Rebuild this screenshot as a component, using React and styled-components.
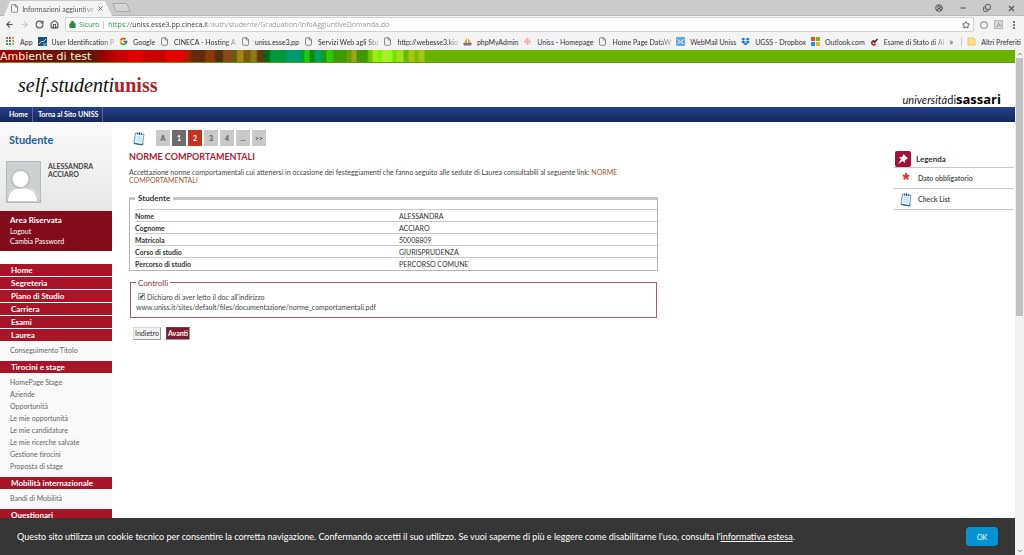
import styled, { createGlobalStyle, css } from 'styled-components';
import {
    ArrowLeft, ArrowRight, RotateCw, House, LockKeyhole, Star, File, X, Minus, Copy,
    CircleUserRound, EllipsisVertical, Circle, Pin, ChevronUp, ChevronDown,
} from 'lucide-react';
import { FaDropbox } from 'react-icons/fa';
import { FcGoogle } from 'react-icons/fc';

const GlobalStyle = createGlobalStyle`
    * {
        box-sizing: border-box;
    }

    body {
        margin: 0;
        background: #fff;
        color: #444;
        font: 7px/8px Lato, "Open Sans", sans-serif;
    }

    a {
        color: inherit;
        text-decoration: none;
    }

    button {
        font-family: inherit;
        padding: 0;
        cursor: pointer;
    }

    svg {
        display: block;
        flex: none;
    }
`;

const Window = styled.div`
    display: flex;
    flex-direction: column;
    height: 100vh;
    overflow: hidden;
`;

/* browser */

const TabStrip = styled.div`
    display: flex;
    align-items: flex-end;
    height: 16px;
    padding: 0 0 0 4px;
    background: #cbcbcb;
    border-bottom: 1px solid #b9b9b9;
`;

const Tab = styled.div`
    display: flex;
    align-items: center;
    justify-content: space-between;
    width: 108px;
    height: 15px;
    margin-bottom: -1px;
    padding: 0 8px 0 6px;
    background: #f3f3f3;
    clip-path: polygon(6px 0, 101px 0, 100% 100%, 0 100%);
    color: #555;
`;

const NewTab = styled.button`
    width: 15px;
    height: 9px;
    margin: 0 0 3px 2px;
    background: #d4d4d4;
    border: 1px solid #aaa;
    border-radius: 2px;
    transform: skewX(24deg);
`;

const Label = styled.span`
    white-space: nowrap;
    ${({ $fade }) => $fade && css`
        mask-image: linear-gradient(to right, #000 80%, rgba(0, 0, 0, 0.3));
    `}
`;

const IconButton = styled.button`
    display: grid;
    place-items: center;
    height: 10px;
    background: none;
    border: 0;
    color: ${({ $color }) => $color || '#555'};
`;

const WindowButtons = styled.div`
    display: flex;
    align-items: center;
    gap: 16px;
    height: 14px;
    margin-left: auto;
    padding-right: 8px;
`;

const Toolbar = styled.div`
    display: flex;
    align-items: center;
    gap: 6px;
    height: 17px;
    padding: 0 5px;
    background: #f3f3f3;
`;

const AddressBar = styled.label`
    display: flex;
    flex: 1;
    align-items: center;
    gap: 3px;
    height: 15px;
    padding: 0 3px;
    background: #fff;
    border: 1px solid #d2d2d2;
    border-radius: 2px;
    color: #2f8a4c;
    font-family: "Open Sans", sans-serif;
`;

const AddressDivider = styled.span`
    width: 1px;
    height: 8px;
    margin: 0 1px;
    background: #ccc;
`;

const AddressInput = styled.input`
    flex: 1;
    min-width: 0;
    padding: 0;
    border: 0;
    outline: 0;
    background: linear-gradient(to right, #2f8a4c 24px, #333 24px 99px, #8f8f8f 99px);
    background-clip: text;
    -webkit-background-clip: text;
    -webkit-text-fill-color: transparent;
    font: inherit;
`;

const Bookmarks = styled.nav`
    display: flex;
    align-items: center;
    gap: 5px;
    height: 17px;
    padding: 0 5px 0 6px;
    background: #f3f3f3;
    color: #333;
`;

const Bookmark = styled.a`
    display: flex;
    align-items: center;
    gap: 5px;
    white-space: nowrap;
    ${({ $last }) => $last && css`
        padding-left: 5px;
        border-left: 1px solid #ccc;
    `}
`;

const More = styled.button`
    margin: 0 3px 0 auto;
    background: none;
    border: 0;
    color: #555;
    font-size: 9px;
`;

/* page frame */

const Viewport = styled.div`
    display: flex;
    flex: 1;
    min-height: 0;
`;

const Site = styled.div`
    display: flex;
    flex: 1;
    flex-direction: column;
    min-width: 0;
`;

const Scrolled = styled.div`
    flex: 1;
    min-height: 0;
    overflow: hidden;
`;

const Scrollbar = styled.div`
    display: flex;
    flex-direction: column;
    width: 9px;
    background: #f1f1f1;
    color: #777;
`;

const Thumb = styled.div`
    height: 51%;
    margin: 0 1px;
    background: #c1c1c1;
`;

const ScrollEnd = styled.div`
    display: grid;
    place-items: center;
    height: 8px;
    ${({ $bottom }) => $bottom && 'margin-top: auto;'}
`;

const TestBanner = styled.div`
    height: 13px;
    background:
        linear-gradient(to right,
            #9a0000 0 20px, #6e1208 30px 60px, #5c1a0a 92px, #a00000 104px, #c80000 120px 128px,
            #e00000 128px 143px, #c80000 143px 164px, #e20000 166px 182px, #a02000 188px, #5e2c08 194px 204px,
            #8a3a08 206px 214px, #503010 216px 222px, #8a4a10 224px 230px, #6a5a10 232px 236px,
            #a08418 238px 243px, #7a5a10 244px 250px, #8a7a18 251px 256px, #5a3a10 258px 263px,
            #006a10 265px 269px, #00983c 271px 286px, #009a70 288px 300px, #00a020 302px 304px,
            #28c800 305px 309px, #0a8a10 310px 314px, #00a070 316px 320px, #1c9a10 322px 326px,
            #30c800 327px 332px, #3a9a00 334px 346px, #6a9a08 347px 351px, #9aa818 352px 356px,
            #3f9800 357px 367px, #70c800 369px 372px, #a8e818 373px 377px, #78f800 378px 382px,
            #b8e830 383px 387px, #88ff10 388px 392px, #78e000 393px 396px, #a0e010 397px 403px,
            #68b800 404px 408px, #a8c810 409px 414px, #7ac000 415px 418px, #a0c810 419px 424px, #69b300 425px);
    border-bottom: 1px solid #5c9a10;
    color: #fff3d8;
    font: 11px/13px "DejaVu Sans", sans-serif;
`;

const Masthead = styled.header`
    display: flex;
    justify-content: space-between;
    height: 44px;
    padding: 0 14px 0 18px;
`;

const Logo = styled.a`
    margin-top: 11px;
    color: #111;
    font: italic 20px/22px "Liberation Serif", serif;

    strong {
        color: #b3202c;
        font-style: normal;
    }
`;

const University = styled.p`
    align-self: flex-end;
    margin: 0;
    color: #111;
    font: 11px/15px Lato, sans-serif;

    strong {
        color: #000;
        font: 700 13px/15px "Open Sans", sans-serif;
    }
`;

const SiteNav = styled.nav`
    display: flex;
    height: 15px;
    background: linear-gradient(#22408a, #182858);
    color: #fff;
    font-weight: 700;
    line-height: 15px;
`;

const SiteNavLink = styled.a`
    padding: 0 4px 0 5px;
    border-right: 1px solid #56699c;

    &:first-child {
        padding-left: 9px;
    }
`;

const Columns = styled.div`
    display: grid;
    grid-template-columns: 112px minmax(0, 1fr) 121px;
    align-items: start;
`;

/* sidebar */

const Sidebar = styled.aside`
    background: #f9f9f9;
`;

const UserCard = styled.div`
    height: 89px;
    padding: 11px 6px 0;
    background: linear-gradient(#fafafa, #e7e7e7);
`;

const UserRole = styled.h2`
    margin: 0 0 14px 3px;
    color: #1c5da8;
    font: 700 11px/14px Lato, sans-serif;
`;

const User = styled.div`
    display: flex;
    gap: 7px;
    font-weight: 700;

    p {
        margin: 1px 0 0;
    }
`;

const PrivateArea = styled.div`
    display: grid;
    height: 40px;
    padding: 4px 10px;
    background: #820c1c;
    color: #fff;
    line-height: 10px;

    strong {
        font-size: 8px;
    }
`;

const Menu = styled.nav`
    display: flex;
    flex-direction: column;
    gap: 1px;
    padding-top: 13px;
    background: #fff;
`;

const MenuSection = styled.div`
    background: #f9f9f9;
`;

const MenuHeading = styled.a`
    display: block;
    height: 12px;
    padding-left: 11px;
    background: #a91428;
    color: #fff;
    font-size: 8px;
    font-weight: 700;
    line-height: 12px;
`;

const SubMenu = styled.div`
    display: grid;
    padding: 3px 10px 4px;
    color: #666;
    line-height: 12px;
`;

/* content */

const Main = styled.main`
    padding: 8px 17px 0;
`;

const Content = styled.div`
    max-width: 529px;
`;

const Steps = styled.nav`
    display: flex;
    align-items: center;
    gap: 2px;
    padding-left: 4px;

    svg {
        margin-right: 9px;
    }
`;

const stepColors = {
    done: ['#6c6c6c', '#fff'],
    current: ['#c33420', '#fff'],
    next: ['#c9c9c9', '#555'],
};

const Step = styled.a`
    width: 14px;
    height: 16px;
    background: ${({ $state }) => stepColors[$state][0]};
    color: ${({ $state }) => stepColors[$state][1]};
    font-weight: 700;
    line-height: 16px;
    text-align: center;
`;

const Title = styled.h1`
    margin: 5px 0;
    color: #b01c34;
    font: 700 9px/12px Lato, sans-serif;
`;

const Intro = styled.p`
    margin: 0;

    a {
        color: #a05a34;
    }
`;

const StudentBox = styled.fieldset`
    margin: 10px 0 0;
    padding: 7px 0 0 5px;
    border: 1px solid #b5b5b5;
    border-top: 3px solid #c6c6c6;

    legend {
        padding: 0 3px;
        color: #333;
        font: 700 8px/8px Lato, sans-serif;
    }
`;

const DataTable = styled.table`
    width: 100%;
    border-collapse: collapse;
    color: #333;

    th, td {
        height: 12px;
        padding: 0;
        border-top: 1px solid #c9c9c9;
        line-height: 10px;
        text-align: left;
    }

    th {
        width: 264px;
    }
`;

const ChecksBox = styled.fieldset`
    margin: 8px 1px 0;
    padding: 5px;
    border: 1px solid #a4606c;

    legend {
        padding: 0 2px;
        color: #8c3444;
        font-size: 8px;
        line-height: 8px;
    }
`;

const CheckLabel = styled.label`
    display: flex;
    align-items: center;
    gap: 2px;
    line-height: 10px;

    input {
        appearance: none;
        display: grid;
        place-items: center;
        width: 7px;
        height: 7px;
        margin: 0 0 0 2px;
        background: #e8e8e8;
        border: 1px solid #aaa;
    }

    input:checked::before {
        content: "✔";
        color: #222;
        font: 7px/6px "DejaVu Sans", sans-serif;
    }
`;

const DocLink = styled.a`
    display: block;
    line-height: 10px;
`;

const Actions = styled.div`
    display: flex;
    gap: 5px;
    margin: 9px 4px;
`;

const ActionButton = styled.button`
    height: 13px;
    padding: 0 1px;
    background: ${({ $primary }) => ($primary ? '#7e1a30' : '#f1f2f2')};
    border: 1px solid ${({ $primary }) => ($primary ? '#6c4450' : '#d8d8d8')};
    border-right-color: #999;
    border-bottom-color: #999;
    color: ${({ $primary }) => ($primary ? '#fff' : '#333')};
    font-size: 7px;
    font-weight: ${({ $primary }) => ($primary ? 700 : 400)};
    line-height: 11px;
`;

const LegendPanel = styled.aside`
    padding-top: 28px;
    font-weight: 700;
`;

const LegendRow = styled.div`
    display: grid;
    grid-template-columns: ${({ $head }) => ($head ? 22 : 24)}px 1fr;
    align-items: center;
    height: ${({ $head }) => ($head ? 18 : 21)}px;
    margin-right: 1px;
    border-bottom: 1px solid #c8c8c8;
    color: #555;

    h2 {
        margin: 0;
        color: #333;
        font: 700 8px/10px Lato, sans-serif;
    }
`;

const PinBox = styled.span`
    display: grid;
    place-items: center;
    width: 16px;
    height: 16px;
    margin-left: 1px;
    background: #a3103c;
    border-radius: 2px;
    color: #fff;
`;

const Asterisk = styled.span`
    height: 16px;
    color: #e0301c;
    font: 700 18px/20px "Liberation Sans", sans-serif;
    text-align: center;
`;

const LegendIcon = styled.span`
    display: grid;
    place-items: center;
`;

const CookieBar = styled.footer`
    display: flex;
    align-items: center;
    justify-content: space-between;
    height: 37px;
    padding: 0 17px;
    background: #363636;
    color: #fff;
    font-size: 9px;
    line-height: 12px;

    p {
        margin: 0;
    }

    a {
        text-decoration: underline;
    }
`;

const OkButton = styled.button`
    width: 32px;
    height: 19px;
    background: #0693d2;
    border: 0;
    border-radius: 4px;
    color: #fff;
    font-size: 7px;
`;

const Avatar = () => (
    <svg width="35" height="42" viewBox="0 0 35 42">
        <rect x=".5" y=".5" width="34" height="41" fill="#ccd0d0" stroke="#b4b8b8" />
        <path d="M1 40c0-10 6-14 16-14S32 31 32 40z" fill="#fff" />
        <path d="M1.500 40c0-9 6-13.500 14.500-13.500S31.500 31 31.500 40" fill="none" stroke="#b8bebe" />
        <circle cx="14.500" cy="18" r="10" fill="#bcc2c2" />
        <circle cx="14.500" cy="18" r="8" fill="#fff" />
    </svg>
);

const Checklist = () => (
    <svg width="12" height="15" viewBox="0 0 12 15">
        <path d="M2.500 2 11 3.500 9.500 13.500.8 12.200z" fill="#e6f4fb" stroke="#5aa2ca" />
        <path d="M1 12.500 9.500 14l.6-1.500" fill="none" stroke="#28587c" />
        <path d="M4 5.500 9 6.300M3.700 7.500l5 .8M3.400 9.500l5 .8" stroke="#9ccbe2" strokeWidth=".7" />
        <path d="M4.500 1.500v2M6.500 1v3M8.500 2v2" stroke="#35617c" />
    </svg>
);

const PushPin = () => (
    <svg width="12" height="12" viewBox="0 0 12 12">
        <path d="M6.500 1 11 5.500 9.500 6 7.800 7.600 8 10 5.500 8 1 11 4 6.500 2 4l2.500.2L6 2.500z" fill="#fff" />
    </svg>
);

const AppsIcon = () => (
    <svg width="9" height="9" viewBox="0 0 9 9">
        {['#e05040', '#e05040', '#e0a030', '#40a060', '#4080d0', '#e0a030', '#40a060', '#40a060', '#e0a030'].map((fill, i) => (
            <rect key={i} x={(i % 3) * 3} y={Math.floor(i / 3) * 3} width="2" height="2" fill={fill} />
        ))}
    </svg>
);

const ChartIcon = () => (
    <svg width="9" height="9" viewBox="0 0 9 9">
        <rect width="9" height="9" fill="#1d5378" />
        <path d="M1 7 4 4l1 1 3-3" fill="none" stroke="#b8dcec" />
        <path d="M5 9V6h4v3z" fill="#4f90b4" />
    </svg>
);

const BoatIcon = () => (
    <svg width="9" height="9" viewBox="0 0 9 9">
        <path d="M4 1v5H1zM5 1l3 5H5z" fill="#e8a030" />
        <path d="M0 6h9L8 8.500H1z" fill="#7a72a0" />
    </svg>
);

const CrestIcon = () => (
    <svg width="9" height="9" viewBox="0 0 9 9">
        <circle cx="4.500" cy="4.500" r="3.500" fill="#f6dada" />
        <path d="M4.500 1v7M1 4.500h7" stroke="#e6b4b4" strokeWidth="1.500" />
    </svg>
);

const MailIcon = () => (
    <svg width="9" height="9" viewBox="0 0 9 9">
        <rect width="9" height="9" rx="1" fill="#64a8e0" />
        <path d="m1.500 2.500 3 2.500 3-2.500M1.500 7l2-2M7.500 7l-2-2" fill="none" stroke="#fff" />
    </svg>
);

const WindowsIcon = () => (
    <svg width="9" height="9" viewBox="0 0 9 9">
        <path d="M0 0h4v4H0z" fill="#ea4a24" />
        <path d="M5 0h4v4H5z" fill="#74b816" />
        <path d="M0 5h4v4H0z" fill="#1a98e0" />
        <path d="M5 5h4v4H5z" fill="#f8b410" />
    </svg>
);

const TickIcon = () => (
    <svg width="9" height="9" viewBox="0 0 9 9">
        <path d="M4.500 4A2 2 0 1 0 5.500 7" fill="none" stroke="#b01828" strokeWidth="1.500" />
        <path d="m3.500 4 1 1.500L7.500 2" fill="none" stroke="#222" strokeWidth="1.300" />
    </svg>
);

const FolderIcon = () => (
    <svg width="9" height="9" viewBox="0 0 9 9">
        <path d="M1 1h6l1 1v6H1z" fill="#fbdf8a" stroke="#ecc75c" />
    </svg>
);

const PdfIcon = () => (
    <svg width="9" height="9" viewBox="0 0 9 9">
        <rect x=".5" y=".5" width="8" height="8" fill="#d8d8d8" stroke="#bbb" />
        <path d="M2 7c2-1 3-3 2.500-5C4 4 6 6 7.500 5.500 5 5 3 6 2 7z" fill="none" stroke="#999" strokeWidth=".7" />
    </svg>
);

const Page = () => <File size={9} strokeWidth={2} color="#666" />;

const bookmarks = [
    { label: 'App', icon: <AppsIcon /> },
    { label: 'User Identification P', icon: <ChartIcon />, fade: true },
    { label: 'Google', icon: <FcGoogle size={9} /> },
    { label: 'CINECA - Hosting A', icon: <Page />, fade: true },
    { label: 'uniss.esse3.pp', icon: <Page /> },
    { label: 'Servizi Web agli Stu', icon: <Page />, fade: true },
    { label: 'http://webesse3.kio', icon: <Page />, fade: true },
    { label: 'phpMyAdmin', icon: <BoatIcon /> },
    { label: 'Uniss - Homepage', icon: <CrestIcon /> },
    { label: 'Home Page DataW', icon: <Page />, fade: true },
    { label: 'WebMail Uniss', icon: <MailIcon /> },
    { label: 'UGSS - Dropbox', icon: <FaDropbox size={9} color="#1878e8" /> },
    { label: 'Outlook.com', icon: <WindowsIcon /> },
    { label: 'Esame di Stato di Al', icon: <TickIcon />, fade: true },
];

const menu = [
    { label: 'Home' },
    { label: 'Segreteria' },
    { label: 'Piano di Studio' },
    { label: 'Carriera' },
    { label: 'Esami' },
    { label: 'Laurea', items: ['Conseguimento Titolo'] },
    {
        label: 'Tirocini e stage',
        items: [
            'HomePage Stage', 'Aziende', 'Opportunità', 'Le mie opportunità', 'Le mie candidature',
            'Le mie ricerche salvate', 'Gestione tirocini', 'Proposta di stage',
        ],
    },
    { label: 'Mobilità internazionale', items: ['Bandi di Mobilità'] },
    { label: 'Questionari' },
];

const steps = [
    ['A', 'next'], ['1', 'done'], ['2', 'current'], ['3', 'next'], ['4', 'next'], ['...', 'next'], ['>>', 'next'],
];

const student = [
    ['Nome', 'ALESSANDRA'],
    ['Cognome', 'ACCIARO'],
    ['Matricola', '50008809'],
    ['Corso di studio', 'GIURISPRUDENZA'],
    ['Percorso di studio', 'PERCORSO COMUNE'],
];

const Browser = () => (
    <div>
        <TabStrip>
            <Tab>
                <Page />
                <Label $fade>Informazioni aggiuntive</Label>
                <IconButton aria-label="Chiudi scheda"><X size={7} strokeWidth={3} /></IconButton>
            </Tab>
            <NewTab aria-label="Nuova scheda" />
            <WindowButtons>
                <IconButton aria-label="Profilo"><CircleUserRound size={8} strokeWidth={3} /></IconButton>
                <IconButton aria-label="Riduci"><Minus size={8} strokeWidth={3} /></IconButton>
                <IconButton aria-label="Ripristina"><Copy size={8} strokeWidth={3} transform="scale(1 -1)" /></IconButton>
                <IconButton aria-label="Chiudi"><X size={9} strokeWidth={3} /></IconButton>
            </WindowButtons>
        </TabStrip>
        <Toolbar>
            <IconButton aria-label="Indietro"><ArrowLeft size={9} strokeWidth={3} /></IconButton>
            <IconButton aria-label="Avanti" $color="#ccc"><ArrowRight size={9} strokeWidth={3} /></IconButton>
            <IconButton aria-label="Ricarica"><RotateCw size={9} strokeWidth={3} /></IconButton>
            <IconButton aria-label="Pagina iniziale"><House size={9} strokeWidth={3} /></IconButton>
            <AddressBar>
                <LockKeyhole size={7} strokeWidth={4} fill="#2f8a4c" />
                Sicuro
                <AddressDivider />
                <AddressInput
                    aria-label="Indirizzo"
                    defaultValue="https://uniss.esse3.pp.cineca.it/auth/studente/Graduation/InfoAggiuntiveDomanda.do"
                />
                <Star size={8} strokeWidth={3} color="#555" />
            </AddressBar>
            <IconButton aria-label="Estensione" $color="#aaa"><Circle size={8} strokeWidth={4} /></IconButton>
            <PdfIcon />
            <IconButton aria-label="Menu"><EllipsisVertical size={10} strokeWidth={3} /></IconButton>
        </Toolbar>
        <Bookmarks>
            {bookmarks.map(({ label, icon, fade }) => (
                <Bookmark key={label} href="#">
                    {icon}
                    <Label $fade={fade}>{label}</Label>
                </Bookmark>
            ))}
            <More aria-label="Altri preferiti">»</More>
            <Bookmark href="#" $last>
                <FolderIcon />
                Altri Preferiti
            </Bookmark>
        </Bookmarks>
    </div>
);

const App = () => {
    return (
        <Window>
            <GlobalStyle />
            <Browser />
            <Viewport>
                <Site>
                    <Scrolled>
                        <TestBanner>Ambiente di test</TestBanner>
                        <Masthead>
                            <Logo href="#">self.studenti<strong>uniss</strong></Logo>
                            <University><em>università</em>di<strong>sassari</strong></University>
                        </Masthead>
                        <SiteNav>
                            <SiteNavLink href="#">Home</SiteNavLink>
                            <SiteNavLink href="#">Torna al Sito UNISS</SiteNavLink>
                        </SiteNav>
                        <Columns>
                            <Sidebar>
                                <UserCard>
                                    <UserRole>Studente</UserRole>
                                    <User>
                                        <Avatar />
                                        <p>ALESSANDRA<br />ACCIARO</p>
                                    </User>
                                </UserCard>
                                <PrivateArea>
                                    <strong>Area Riservata</strong>
                                    <a href="#">Logout</a>
                                    <a href="#">Cambia Password</a>
                                </PrivateArea>
                                <Menu>
                                    {menu.map(({ label, items }) => (
                                        <MenuSection key={label}>
                                            <MenuHeading href="#">{label}</MenuHeading>
                                            {items && (
                                                <SubMenu>
                                                    {items.map((item) => <a key={item} href="#">{item}</a>)}
                                                </SubMenu>
                                            )}
                                        </MenuSection>
                                    ))}
                                </Menu>
                            </Sidebar>
                            <Main>
                                <Content>
                                    <Steps>
                                        <Checklist />
                                        {steps.map(([label, state]) => (
                                            <Step key={label} href="#" $state={state}>{label}</Step>
                                        ))}
                                    </Steps>
                                    <Title>NORME COMPORTAMENTALI</Title>
                                    <Intro>
                                        Accettazione norme comportamentali cui attenersi in occasione dei festeggiamenti
                                        che fanno seguito alle sedute di Laurea consultabili al seguente
                                        link: <a href="#">NORME COMPORTAMENTALI</a>
                                    </Intro>
                                    <StudentBox>
                                        <legend>Studente</legend>
                                        <DataTable>
                                            <tbody>
                                                {student.map(([name, value]) => (
                                                    <tr key={name}>
                                                        <th scope="row">{name}</th>
                                                        <td>{value}</td>
                                                    </tr>
                                                ))}
                                            </tbody>
                                        </DataTable>
                                    </StudentBox>
                                    <ChecksBox>
                                        <legend>Controlli</legend>
                                        <CheckLabel>
                                            <input type="checkbox" defaultChecked />
                                            Dichiaro di aver letto il doc all'indirizzo
                                        </CheckLabel>
                                        <DocLink href="#">
                                            www.uniss.it/sites/default/files/documentazione/norme_comportamentali.pdf
                                        </DocLink>
                                    </ChecksBox>
                                    <Actions>
                                        <ActionButton>Indietro</ActionButton>
                                        <ActionButton $primary>Avanti</ActionButton>
                                    </Actions>
                                </Content>
                            </Main>
                            <LegendPanel>
                                <LegendRow $head>
                                    <PinBox><PushPin /></PinBox>
                                    <h2>Legenda</h2>
                                </LegendRow>
                                <LegendRow>
                                    <Asterisk>*</Asterisk>
                                    <span>Dato obbligatorio</span>
                                </LegendRow>
                                <LegendRow>
                                    <LegendIcon><Checklist /></LegendIcon>
                                    <span>Check List</span>
                                </LegendRow>
                            </LegendPanel>
                        </Columns>
                    </Scrolled>
                    <CookieBar>
                        <p>
                            Questo sito utilizza un cookie tecnico per consentire la corretta navigazione. Confermando
                            accetti il suo utilizzo. Se vuoi saperne di più e leggere come disabilitarne l'uso, consulta
                            l'<a href="#">informativa estesa</a>.
                        </p>
                        <OkButton>OK</OkButton>
                    </CookieBar>
                </Site>
                <Scrollbar>
                    <ScrollEnd><ChevronUp size={6} strokeWidth={4} /></ScrollEnd>
                    <Thumb />
                    <ScrollEnd $bottom><ChevronDown size={6} strokeWidth={4} /></ScrollEnd>
                </Scrollbar>
            </Viewport>
        </Window>
    );
};

export default App;
